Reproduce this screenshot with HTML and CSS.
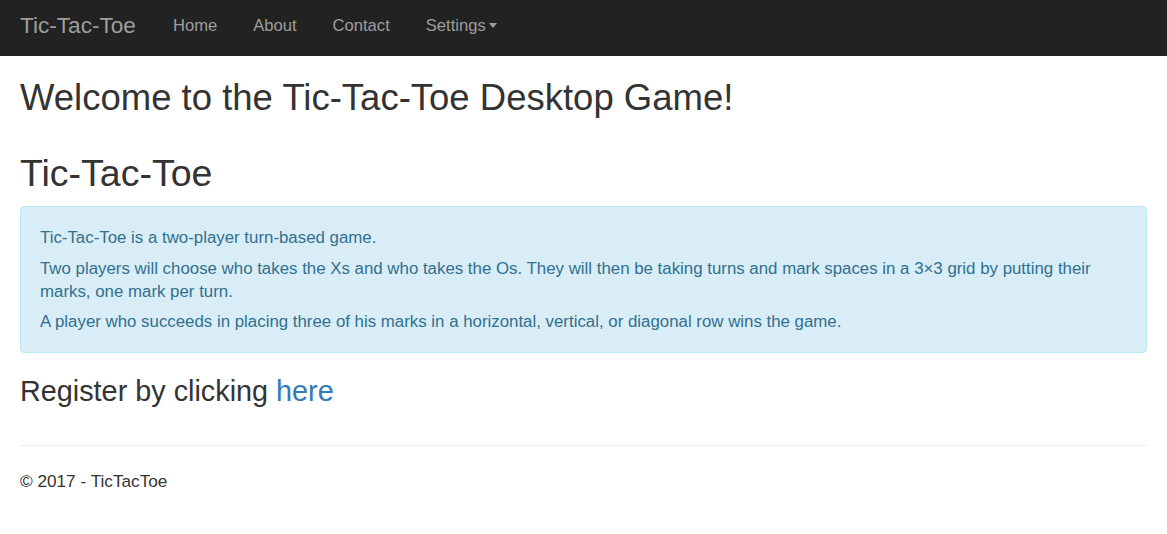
FILE: index.html
```html
<!DOCTYPE html>
<html lang="en">
<head>
<meta charset="utf-8">
<title>Tic-Tac-Toe</title>
<link rel="stylesheet" href="styles.css">
</head>
<body>
<nav class="navbar">
  <a class="brand" href="#">Tic-Tac-Toe</a>
  <ul class="nav-links">
    <li><a href="#">Home</a></li>
    <li><a href="#">About</a></li>
    <li><a href="#">Contact</a></li>
    <li><a href="#">Settings<span class="caret"></span></a></li>
  </ul>
</nav>
<div class="container">
  <h1 class="title">Welcome to the Tic-Tac-Toe Desktop Game!</h1>
  <h2 class="subtitle">Tic-Tac-Toe</h2>
  <div class="alert">
    <p>Tic-Tac-Toe is a two-player turn-based game.</p>
    <p>Two players will choose who takes the Xs and who takes the Os. They will then be taking turns and mark spaces in a 3×3 grid by putting their marks, one mark per turn.</p>
    <p>A player who succeeds in placing three of his marks in a horizontal, vertical, or diagonal row wins the game.</p>
  </div>
  <h3 class="register">Register by clicking <a href="#">here</a></h3>
  <hr class="divider">
  <footer class="footer">
    <p>© 2017 - TicTacToe</p>
  </footer>
</div>
</body>
</html>
```
FILE: styles.css
```css
* { box-sizing: border-box; }
html, body {
  margin: 0;
  padding: 0;
  background: #fff;
}
body {
  font-family: "Liberation Sans", Arial, sans-serif;
  font-size: 16.85px;
  line-height: 23px;
  color: #333;
}
a { color: #337ab7; text-decoration: none; }

.navbar {
  display: flex;
  align-items: flex-start;
  height: 56px;
  background: #222;
  padding: 0 20px;
}
.brand {
  font-size: 22.6px;
  line-height: 22px;
  color: #9d9d9d;
  padding: 15px 19px 0 0;
}
.nav-links {
  display: flex;
  list-style: none;
  margin: 0;
  padding: 0;
}
.nav-links a {
  display: block;
  font-size: 16.6px;
  line-height: 23px;
  color: #9d9d9d;
  padding: 14px 18px 0;
}
.caret {
  display: inline-block;
  width: 0;
  height: 0;
  margin-left: 3px;
  vertical-align: middle;
  border-top: 5px solid #9d9d9d;
  border-left: 4.5px solid transparent;
  border-right: 4.5px solid transparent;
  position: relative;
  top: -1px;
}

.container {
  padding: 0 20px;
}
.title {
  font-size: 36.5px;
  line-height: 1.1;
  font-weight: 400;
  margin: 21.5px 0 0;
}
.subtitle {
  font-size: 37.5px;
  line-height: 1.1;
  font-weight: 400;
  margin: 35.5px 0 12px;
}
.alert {
  background: #d9edf7;
  border: 1px solid #bce8f1;
  border-radius: 4px;
  color: #31708f;
  padding: 19px;
}
.alert p { margin: 0; }
.alert p + p { margin-top: 7.5px; }
.register {
  font-size: 28.8px;
  line-height: 1.1;
  font-weight: 400;
  margin: 23px 0 0;
}
.divider {
  border: 0;
  border-top: 1px solid #e2eff6;
  margin: 36.5px 0 24.5px;
  height: 0;
}
.footer p { margin: 0; font-size: 17.2px; }
```
